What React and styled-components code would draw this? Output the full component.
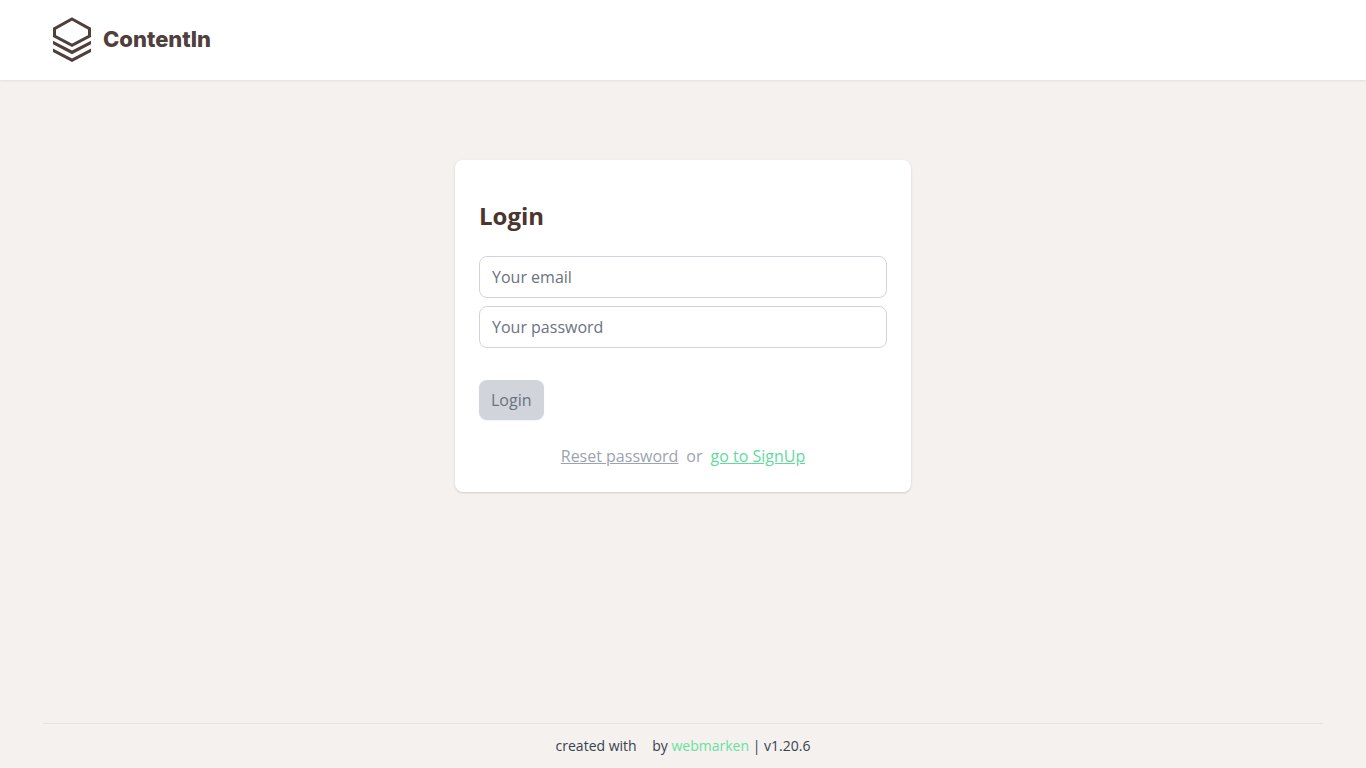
import { useState } from "react";
import styled, { createGlobalStyle } from "styled-components";

function App() {

    const [email, setEmail] = useState("");
    const [password, setPassword] = useState("");

    const incomplete = email === "" || password === "";

    function login (event) {
        event.preventDefault();
    }

    return (
        <Page>
            <GlobalStyle />
            <Header>
                <Brand href="#">
                    <LogoIcon />
                    <BrandName>ContentIn</BrandName>
                </Brand>
            </Header>
            <Main>
                <Card>
                    <Title>Login</Title>
                    <form onSubmit={login}>
                        <Inputs>
                            <Input type="email" placeholder="Your email" aria-label="Your email" required
                                onChange={(e) => setEmail(e.target.value)} value={email} />
                            <Input type="password" placeholder="Your password" aria-label="Your password" required
                                onChange={(e) => setPassword(e.target.value)} value={password} />
                        </Inputs>
                        <LoginButton type="submit" disabled={incomplete}>Login</LoginButton>
                    </form>
                    <Links>
                        <TextLink href="#reset">Reset password</TextLink>
                        <span>or</span>
                        <TextLink href="#signup" $green>go to SignUp</TextLink>
                    </Links>
                </Card>
            </Main>
            <Footer>
                created with <Heart /> by <AuthorLink href="#webmarken">webmarken</AuthorLink> | v1.20.6
            </Footer>
        </Page>
    )
}

function LogoIcon() {
    return (
        <svg width="40" height="46" viewBox="0 0 40 46" fill="#4f403d" aria-hidden="true">
            <path d="M20 2 37.5 11.6V19.2L20 28.4 2.5 19.2V11.6Z" fill="none" stroke="#4f403d" strokeWidth="3" />
            <path d="M1 23.8 20 33.6 39 23.8V27.3L20 37.2 1 27.3Z" />
            <path d="M1 31.4 20 41.4 39 31.4V34.9L20 45 1 34.9Z" />
        </svg>
    )
}

const GlobalStyle = createGlobalStyle`
    * {
        box-sizing: border-box;
    }
    body {
        margin: 0;
        background-color: #f5f1ee;
        font-family: "Open Sans", sans-serif;
        font-size: 16px;
        line-height: 24px;
    }
`
const Page = styled.div`
    min-height: 100vh;
    display: flex;
    flex-direction: column;
`
const Header = styled.header`
    height: 80px;
    padding: 0 52px;
    display: flex;
    align-items: center;
    background-color: #ffffff;
    box-shadow: 0 1px 2px rgba(0, 0, 0, 0.08);
`
const Brand = styled.a`
    display: flex;
    align-items: center;
    gap: 11px;
    color: #4f403d;
    text-decoration: none;
`
const BrandName = styled.span`
    padding-bottom: 2px;
    font-family: Inter, sans-serif;
    font-size: 22px;
    font-weight: 800;
`
const Main = styled.main`
    flex: 1;
    padding: 80px 16px;
`
const Card = styled.section`
    max-width: 456px;
    margin: 0 auto;
    padding: 40px 24px 24px;
    border-radius: 8px;
    background-color: #ffffff;
    box-shadow: 0 1px 3px rgba(0, 0, 0, 0.1), 0 1px 2px rgba(0, 0, 0, 0.06);
`
const Title = styled.h1`
    margin: 0 0 24px;
    font-size: 24px;
    line-height: 32px;
    font-weight: 700;
    color: #4b352d;
`
const Inputs = styled.div`
    display: flex;
    flex-direction: column;
    gap: 8px;
    margin-bottom: 32px;
`
const Input = styled.input`
    width: 100%;
    height: 42px;
    padding: 8px 12px;
    border: 1px solid #d1d5db;
    border-radius: 8px;
    background-color: #ffffff;
    font: inherit;
    color: #374151;

    &::placeholder {
        color: #6b7280;
    }
`
const LoginButton = styled.button`
    display: block;
    height: 40px;
    padding: 8px 12px;
    border: none;
    border-radius: 8px;
    background-color: #34d399;
    font: inherit;
    color: #ffffff;
    box-shadow: 0 1px 2px rgba(0, 0, 0, 0.05);

    &:disabled {
        background-color: #d1d5db;
        color: #6b7280;
    }
`
const Links = styled.div`
    display: flex;
    justify-content: center;
    gap: 8px;
    margin-top: 24px;
    color: #9ca3af;
`
const TextLink = styled.a`
    color: ${(props) => (props.$green ? "#5fdb9d" : "#9ca3af")};
    text-decoration: underline;
`
const Footer = styled.footer`
    width: 100%;
    max-width: 1280px;
    margin: 0 auto;
    padding: 12px 0;
    border-top: 1px solid #e7e5e4;
    font-size: 14px;
    line-height: 20px;
    text-align: center;
    color: #374151;
`
const Heart = styled.span`
    margin: 0 6px;
`
const AuthorLink = styled.a`
    color: #68e0a0;
    text-decoration: none;
`
export default App;
